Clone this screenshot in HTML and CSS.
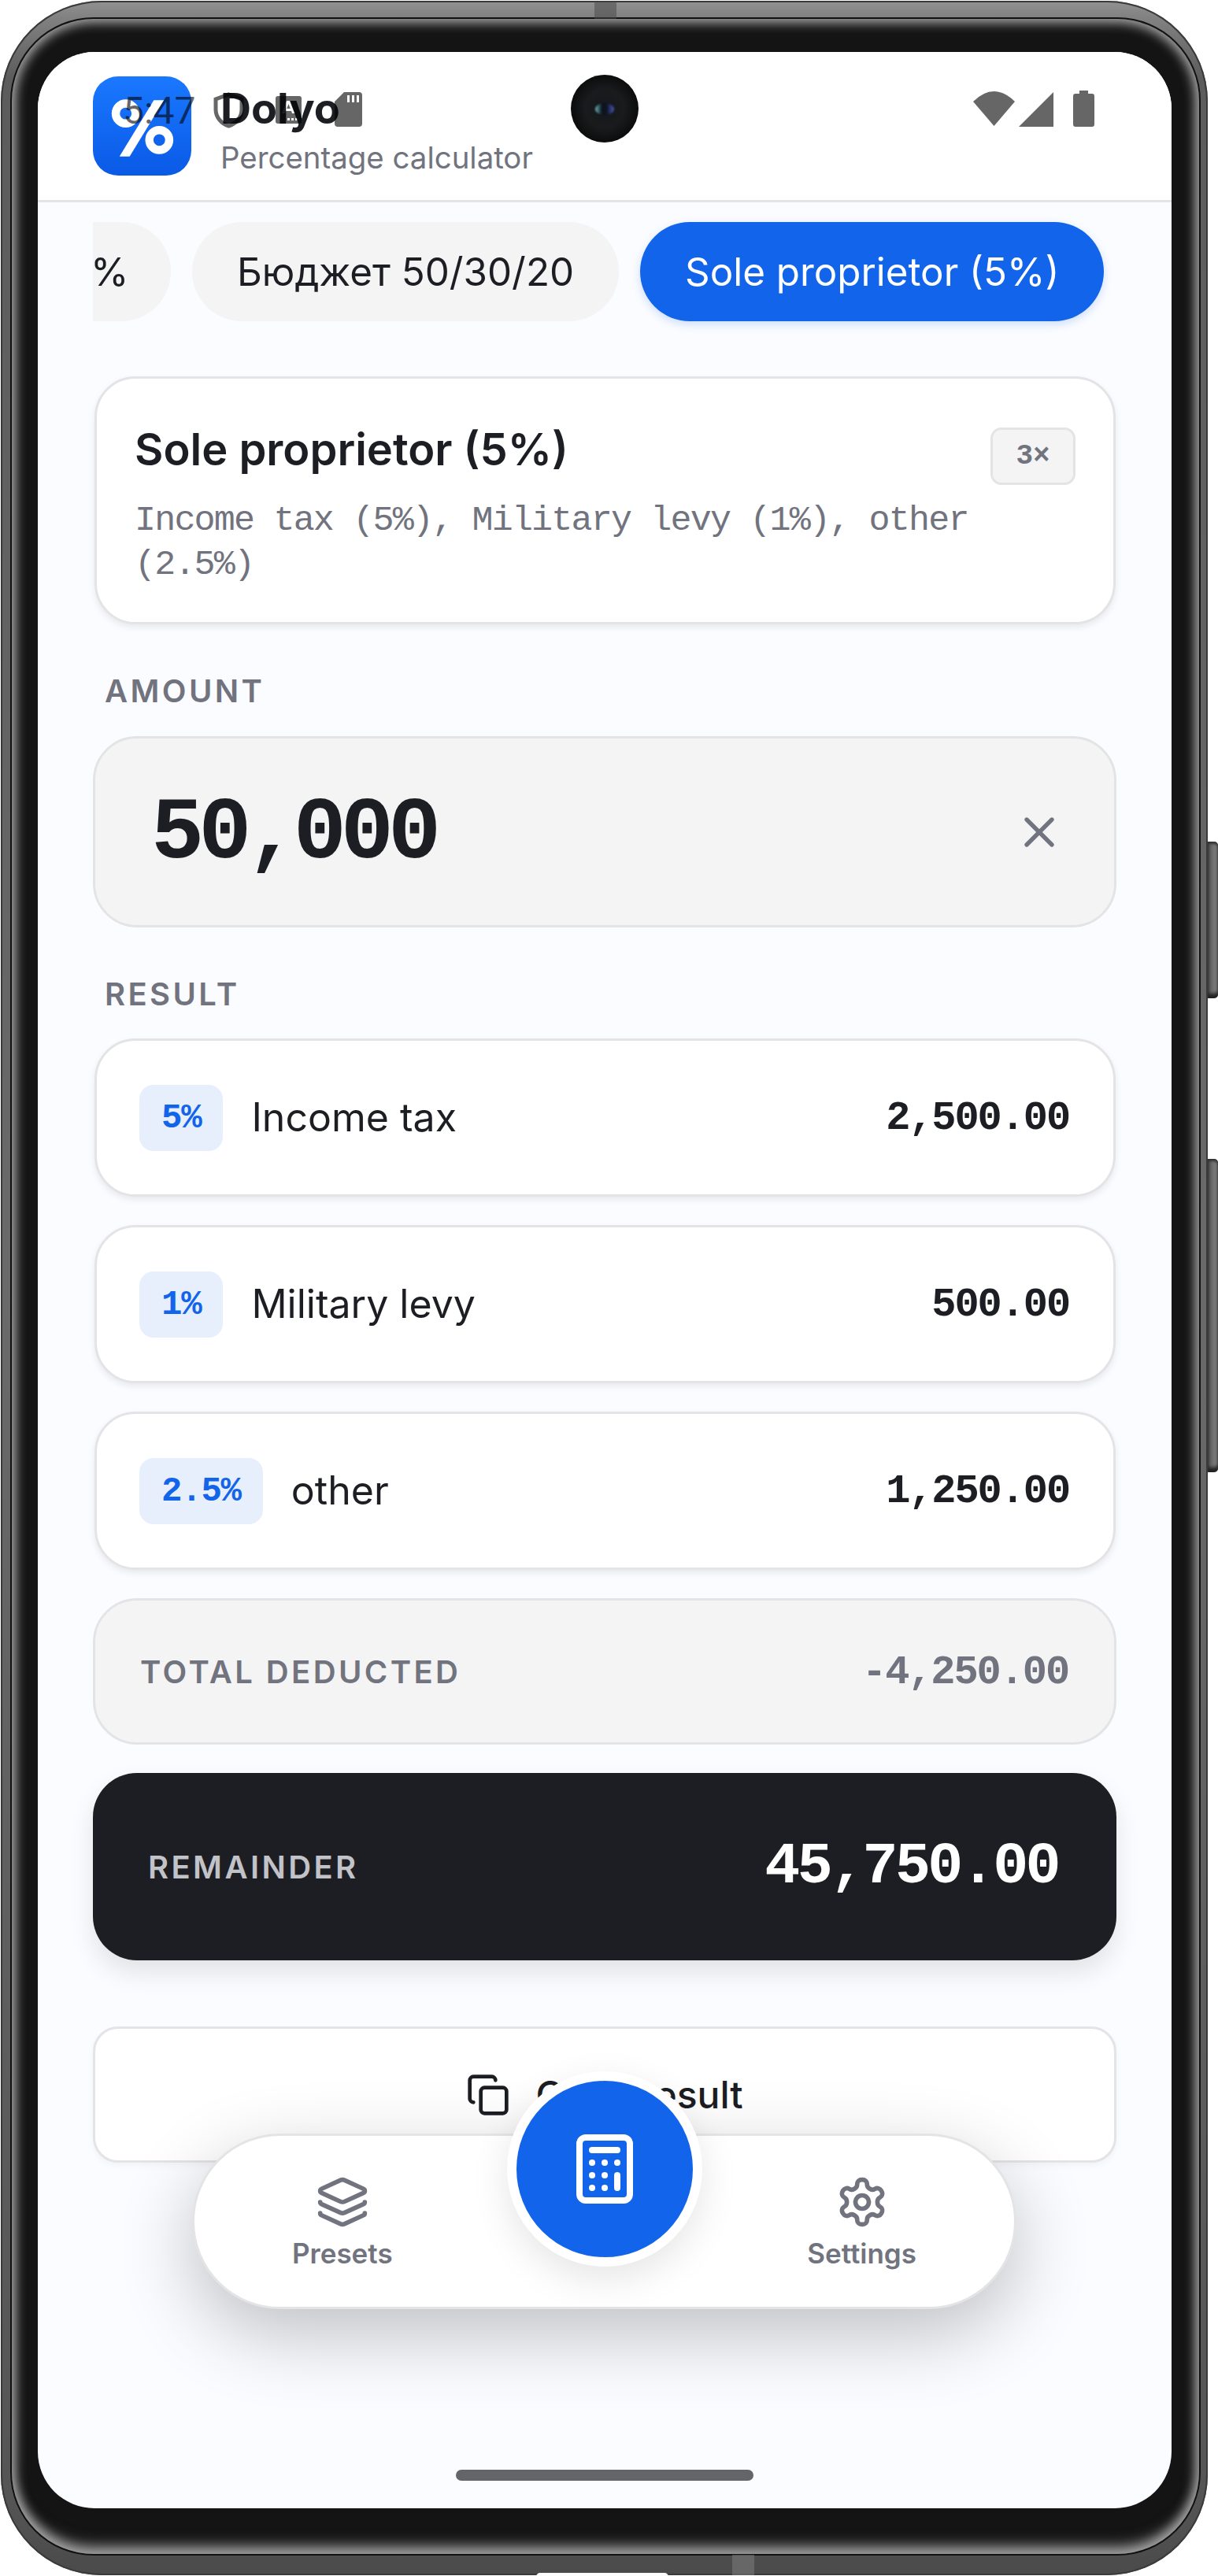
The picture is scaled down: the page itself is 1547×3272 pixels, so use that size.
FILE: index.html
```html
<!DOCTYPE html>
<html>
  <head>
    <title>Dolyo</title>
    <link rel="stylesheet" href="styles.css">
  </head>
  <body>
    <div class="phone">
      <div class="side-btn side-btn-top"></div>
      <div class="side-btn side-btn-low"></div>
      <div class="antenna antenna-top"></div>
      <div class="antenna antenna-bottom"></div>
      <div class="usb"></div>

      <div class="bezel">
        <div class="screen">
          <div class="camera"><div class="lens"></div></div>

          <div class="status">
            <div class="status-left">
              <span class="time">5:47</span>
              <svg class="st-shield" viewBox="0 0 41 46"><path d="M20.5 3 37 9v13c0 10-7 18-16.5 21C11 40 4 32 4 22V9z" fill="none" stroke="#000" stroke-opacity="0.6" stroke-width="5"/></svg>
              <svg class="st-a" viewBox="0 0 33 35"><path class="st-fill" fill-rule="evenodd" d="M3 0h27a3 3 0 0 1 3 3v29a3 3 0 0 1-3 3H3a3 3 0 0 1-3-3V3a3 3 0 0 1 3-3zm12 28v3h3v-3zm5 0v3h3v-3zm5 0v3h3v-3zM14 6 8 22h4l1-3h7l1 3h4L19 6zm2.500 4 2.300 6h-4.600z"/></svg>
              <svg class="st-sd" viewBox="0 0 35 44"><path class="st-fill" fill-rule="evenodd" d="M12 0h19a4 4 0 0 1 4 4v36a4 4 0 0 1-4 4H4a4 4 0 0 1-4-4V12zm4 4v9h3V4zm6 0v9h3V4zm6 0v9h3V4z"/></svg>
            </div>
            <div class="status-right">
              <svg class="st-wifi" viewBox="0 0 53 44"><path class="st-fill" d="M26.500 44 0 13Q26.500-13 53 13z"/></svg>
              <svg class="st-signal" viewBox="0 0 44 44"><path class="st-fill" d="M44 0v44H0z"/></svg>
              <svg class="st-battery" viewBox="0 0 27 46"><path class="st-fill" d="M8 0h11v4h5a3 3 0 0 1 3 3v36a3 3 0 0 1-3 3H3a3 3 0 0 1-3-3V7a3 3 0 0 1 3-3h5z"/></svg>
            </div>
          </div>

          <header class="app-header">
            <div class="logo">
              <svg viewBox="0 0 126 126">
                <circle cx="42" cy="47" r="12.75" fill="none" stroke="#fff" stroke-width="10.5"/>
                <circle cx="85" cy="81" r="12.75" fill="none" stroke="#fff" stroke-width="10.5"/>
                <path d="M78 30h13L47 102H34z" fill="#fff"/>
              </svg>
            </div>
            <div class="app-titles">
              <div class="app-name">Dolyo</div>
              <div class="app-sub">Percentage calculator</div>
            </div>
          </header>

          <div class="chips">
            <div class="chip chip-cut">%</div>
            <div class="chip">Бюджет 50/30/20</div>
            <div class="chip chip-active">Sole proprietor (5%)</div>
          </div>

          <main class="content">
            <section class="preset-card">
              <div class="preset-text">
                <h2>Sole proprietor (5%)</h2>
                <p>Income tax (5%), Military levy (1%), other (2.5%)</p>
              </div>
              <span class="times-badge">3×</span>
            </section>

            <div class="label">AMOUNT</div>
            <div class="amount-input">
              <span class="amount-value">50,000</span>
              <svg class="icon clear-icon" viewBox="0 0 24 24"><path d="M18 6 6 18"/><path d="m6 6 12 12"/></svg>
            </div>

            <div class="label label-result">RESULT</div>
            <div class="results">
              <div class="row">
                <span class="pct">5%</span>
                <span class="row-name">Income tax</span>
                <span class="row-sum">2,500.00</span>
              </div>
              <div class="row">
                <span class="pct">1%</span>
                <span class="row-name">Military levy</span>
                <span class="row-sum">500.00</span>
              </div>
              <div class="row">
                <span class="pct">2.5%</span>
                <span class="row-name">other</span>
                <span class="row-sum">1,250.00</span>
              </div>
              <div class="total">
                <span class="total-label">TOTAL DEDUCTED</span>
                <span class="total-sum">-4,250.00</span>
              </div>
              <div class="remainder">
                <span class="remainder-label">REMAINDER</span>
                <span class="remainder-sum">45,750.00</span>
              </div>
            </div>

            <button class="copy-btn">
              <svg class="icon copy-icon" viewBox="0 0 24 24"><rect width="14" height="14" x="8" y="8" rx="2" ry="2"/><path d="M4 16c-1.1 0-2-.9-2-2V4c0-1.1.9-2 2-2h10c1.1 0 2 .9 2 2"/></svg>
              Copy result
            </button>
          </main>

          <nav class="bottom-nav">
            <div class="nav-item">
              <svg class="icon nav-icon" viewBox="0 0 24 24"><path d="M12.83 2.18a2 2 0 0 0-1.66 0L2.6 6.08a1 1 0 0 0 0 1.83l8.58 3.91a2 2 0 0 0 1.66 0l8.58-3.9a1 1 0 0 0 0-1.83z"/><path d="M2 12a1 1 0 0 0 .58.91l8.6 3.91a2 2 0 0 0 1.65 0l8.58-3.9A1 1 0 0 0 22 12"/><path d="M2 17a1 1 0 0 0 .58.91l8.6 3.91a2 2 0 0 0 1.65 0l8.58-3.9A1 1 0 0 0 22 17"/></svg>
              <span>Presets</span>
            </div>
            <div class="nav-item">
              <svg class="icon nav-icon" viewBox="0 0 24 24"><path d="M12.22 2h-.44a2 2 0 0 0-2 2v.18a2 2 0 0 1-1 1.73l-.43.25a2 2 0 0 1-2 0l-.15-.08a2 2 0 0 0-2.73.73l-.22.38a2 2 0 0 0 .73 2.73l.15.1a2 2 0 0 1 1 1.72v.51a2 2 0 0 1-1 1.74l-.15.09a2 2 0 0 0-.73 2.73l.22.38a2 2 0 0 0 2.73.73l.15-.08a2 2 0 0 1 2 0l.43.25a2 2 0 0 1 1 1.73V20a2 2 0 0 0 2 2h.44a2 2 0 0 0 2-2v-.18a2 2 0 0 1 1-1.73l.43-.25a2 2 0 0 1 2 0l.15.08a2 2 0 0 0 2.73-.73l.22-.39a2 2 0 0 0-.73-2.73l-.15-.08a2 2 0 0 1-1-1.74v-.5a2 2 0 0 1 1-1.74l.15-.09a2 2 0 0 0 .73-2.73l-.22-.38a2 2 0 0 0-2.73-.73l-.15.08a2 2 0 0 1-2 0l-.43-.25a2 2 0 0 1-1-1.73V4a2 2 0 0 0-2-2z"/><circle cx="12" cy="12" r="3"/></svg>
              <span>Settings</span>
            </div>
          </nav>

          <button class="fab">
            <svg class="icon fab-icon" viewBox="0 0 24 24"><rect width="16" height="20" x="4" y="2" rx="2"/><line x1="8" x2="16" y1="6" y2="6"/><line x1="16" x2="16" y1="14" y2="18"/><path d="M16 10h.01"/><path d="M12 10h.01"/><path d="M8 10h.01"/><path d="M12 14h.01"/><path d="M8 14h.01"/><path d="M12 18h.01"/><path d="M8 18h.01"/></svg>
          </button>

          <div class="home-bar"></div>
        </div>
      </div>
    </div>
  </body>
</html>
```
FILE: styles.css
```css
* {
  box-sizing: border-box;
}

body {
  margin: 0;
  background: #fff;
  font-family: Inter, "Noto Sans", sans-serif;
  color: #1c1e23;
}

/* device frame */
.phone {
  position: relative;
  width: 1533px;
  height: 3270px;
  margin: 1px 0 0 1px;
  padding: 23px 11px 27px 14px;
  border-radius: 128px;
  background: linear-gradient(180deg, #929292 0, #828282 0.6%, #5c5c5c 3%, #6a6a6a 50%, #555 97%, #4a4a4a 100%);
  box-shadow: inset 0 0 0 2px #3a3a3a;
}

.bezel {
  height: 100%;
  padding: 42px 35px 58px 33px;
  border-radius: 104px;
  background: #141414;
  box-shadow: 0 0 0 2px #111, inset 0 0 14px 5px #a8a8a8, inset 0 -22px 16px -8px #555;
}

.side-btn {
  position: absolute;
  right: -13px;
  width: 13px;
  border-radius: 0 5px 5px 0;
  background: linear-gradient(90deg, #555, #8a8a8a);
  box-shadow: inset 0 3px 3px #333, inset 0 -6px 4px #222;
}

.side-btn-top {
  top: 1068px;
  height: 199px;
}

.side-btn-low {
  top: 1471px;
  height: 398px;
}

.antenna {
  position: absolute;
  width: 28px;
  height: 22px;
  background: rgba(70, 70, 70, 0.5);
}

.antenna-top {
  top: 1px;
  left: 754px;
}

.antenna-bottom {
  bottom: 0;
  left: 929px;
  height: 26px;
  background: rgba(130, 130, 130, 0.5);
}

.usb {
  position: absolute;
  left: 680px;
  bottom: -2px;
  width: 168px;
  height: 5px;
  border-radius: 5px 5px 0 0;
  background: #fff;
}

/* screen */
.screen {
  position: relative;
  height: 100%;
  border-radius: 72px;
  overflow: hidden;
  background: #fbfcff;
}

.camera {
  position: absolute;
  top: 29px;
  left: 677px;
  width: 86px;
  height: 86px;
  border-radius: 50%;
  background: radial-gradient(circle, #14171a 0, #191b1d 40%, #0a0a0a 75%, #050505 100%);
  z-index: 5;
}

.lens {
  width: 24px;
  height: 15px;
  margin: 36px auto 0;
  border-radius: 50%;
  background: linear-gradient(90deg, #6fb8b4, #0c1420 35%, #0c1420 60%, #4a55b8);
  filter: blur(1px);
}

/* status bar sits over the app header, translucent like the real one */
.status {
  position: absolute;
  top: 49px;
  left: 108px;
  right: 98px;
  display: flex;
  justify-content: space-between;
  z-index: 4;
}

.status-left {
  display: flex;
  position: relative;
  height: 46px;
}

.status-left svg {
  position: absolute;
}

.st-fill {
  fill: rgba(0, 0, 0, 0.6);
}

.time {
  font-family: Roboto, sans-serif;
  font-size: 48px;
  line-height: 46px;
  margin-top: 3px;
  color: rgba(0, 0, 0, 0.6);
}

.st-shield {
  left: 114px;
  top: 2px;
  width: 41px;
  height: 46px;
}

.st-a {
  left: 194px;
  top: 7px;
  width: 33px;
  height: 35px;
}

.st-sd {
  left: 269px;
  top: 2px;
  width: 35px;
  height: 44px;
}

.status-right {
  display: flex;
  align-items: flex-start;
}

.st-wifi {
  width: 53px;
  height: 44px;
  margin-top: 1px;
}

.st-signal {
  width: 44px;
  height: 44px;
  margin: 2px 0 0 5px;
}

.st-battery {
  width: 27px;
  height: 46px;
  margin-left: 25px;
}

.app-header {
  display: flex;
  height: 191px;
  padding: 31px 70px 0;
  gap: 37px;
  background: #fff;
  border-bottom: 3px solid #e4e4e7;
}

.logo {
  width: 125px;
  height: 126px;
  border-radius: 32px;
  background: linear-gradient(180deg, #1a78ff, #0a5ae6);
  overflow: hidden;
}

.logo svg {
  display: block;
  width: 100%;
  height: 100%;
}

.app-titles {
  padding-top: 10px;
}

.app-name {
  font-size: 54px;
  line-height: 62px;
  font-weight: 700;
}

.app-sub {
  margin-top: 7px;
  font-size: 38.4px;
  line-height: 48px;
  color: #71737e;
}

/* preset chips */
.chips {
  display: flex;
  gap: 27px;
  margin: 25px 84px 0 70px;
}

.chip {
  flex: none;
  height: 126px;
  padding: 0 57px;
  border-radius: 63px;
  background: #f4f4f5;
  font-size: 49.3px;
  line-height: 126px;
}

.chip-cut {
  width: 99px;
  padding: 0;
  border-radius: 0 63px 63px 0;
  text-indent: -3px;
}

.chip-active {
  background: #1265ea;
  color: #fff;
  box-shadow: 0 4px 12px rgba(18, 101, 234, 0.2);
}

.content {
  display: flex;
  flex-direction: column;
  padding: 70px 70px 0;
}

.preset-card {
  display: flex;
  justify-content: space-between;
  align-items: flex-start;
  height: 315px;
  margin: 0 1px 0 2px;
  padding: 58px 48px 0;
  border: 3px solid #e4e4e7;
  border-radius: 52px;
  background: #fff;
  box-shadow: 0 4px 8px rgba(0, 0, 0, 0.08);
}

.preset-card h2 {
  margin: 0;
  font-size: 56px;
  line-height: 64px;
  font-weight: 600;
}

.preset-card p {
  width: 1060px;
  margin: 31px 0 0;
  font-family: "Liberation Mono", monospace;
  font-size: 45px;
  line-height: 56px;
  letter-spacing: -1.8px;
  color: #71737e;
}

.times-badge {
  width: 108px;
  height: 73px;
  margin-top: 4px;
  border: 3px solid #e4e4e7;
  border-radius: 14px;
  background: #f4f4f5;
  font-family: "Liberation Mono", monospace;
  font-size: 36px;
  font-weight: 700;
  line-height: 67px;
  text-align: center;
  color: #71737e;
}

.label {
  margin: 61px 0 33px 15px;
  font-size: 40px;
  line-height: 48px;
  font-weight: 600;
  letter-spacing: 3.4px;
  color: #71737e;
}

.label-result {
  margin-bottom: 32px;
}

.amount-input {
  display: flex;
  align-items: center;
  justify-content: space-between;
  height: 243px;
  padding: 0 63px 0 71px;
  border: 3px solid #e4e4e7;
  border-radius: 56px;
  background: #f4f4f5;
}

.amount-value {
  margin-top: 6px;
  font-family: "Liberation Mono", monospace;
  font-size: 112px;
  font-weight: 700;
  letter-spacing: -7px;
}

.icon {
  fill: none;
  stroke: currentColor;
  stroke-width: 2;
  stroke-linecap: round;
  stroke-linejoin: round;
}

.clear-icon {
  width: 64px;
  height: 64px;
  color: #71737e;
}

.results {
  display: flex;
  flex-direction: column;
  gap: 36px;
}

.row {
  display: flex;
  align-items: center;
  height: 201px;
  margin: 0 1px 0 2px;
  padding: 0 56px 0 54px;
  border: 3px solid #e4e4e7;
  border-radius: 52px;
  background: #fff;
  box-shadow: 0 4px 8px rgba(0, 0, 0, 0.08);
}

.pct {
  padding: 0 28px;
  height: 84px;
  border-radius: 18px;
  background: #e7effc;
  font-family: "Liberation Mono", monospace;
  font-size: 44px;
  font-weight: 700;
  line-height: 84px;
  letter-spacing: -1.2px;
  color: #1265ea;
}

.row-name {
  margin: 0 0 2px 36px;
  font-size: 50px;
}

.row-sum,
.total-sum {
  margin: 2px 0 0 auto;
  font-family: "Liberation Mono", monospace;
  font-size: 52px;
  font-weight: 700;
  letter-spacing: -2.1px;
}

.total {
  display: flex;
  align-items: center;
  height: 186px;
  padding: 0 58px 0 57px;
  border: 3px solid #e4e4e7;
  border-radius: 56px;
  background: #f4f4f5;
}

.total-label,
.remainder-label {
  font-size: 40px;
  font-weight: 600;
  letter-spacing: 3.4px;
  color: #71737e;
}

.total-sum {
  color: #71737e;
}

.remainder {
  display: flex;
  align-items: center;
  justify-content: space-between;
  height: 238px;
  padding: 0 74px 0 70px;
  border-radius: 56px;
  background: #1c1e23;
  box-shadow: 0 16px 32px rgba(0, 0, 0, 0.1);
}

.remainder-label {
  color: #c2c3c8;
}

.remainder-sum {
  font-family: "Liberation Mono", monospace;
  font-size: 75px;
  font-weight: 700;
  letter-spacing: -3.6px;
  color: #fff;
}

.copy-btn {
  display: flex;
  align-items: center;
  justify-content: center;
  gap: 32px;
  height: 173px;
  margin-top: 84px;
  border: 3px solid #e4e4e7;
  border-radius: 32px;
  background: #fff;
  box-shadow: 0 4px 8px rgba(0, 0, 0, 0.04);
  font-family: Inter, sans-serif;
  font-size: 48px;
  font-weight: 500;
  color: #1c1e23;
}

.copy-icon {
  width: 56px;
  height: 56px;
}

/* floating nav */
.bottom-nav {
  position: absolute;
  top: 2644px;
  left: 196px;
  width: 1047px;
  height: 223px;
  display: flex;
  justify-content: space-between;
  padding: 50px 124px 0 124px;
  border: 3px solid #e4e4e7;
  border-radius: 112px;
  background: #fff;
  box-shadow: 0 32px 96px rgba(0, 0, 0, 0.24);
}

.nav-item {
  display: flex;
  flex-direction: column;
  align-items: center;
  gap: 9px;
  font-size: 35px;
  line-height: 44px;
  font-weight: 600;
  color: #71737e;
}

.nav-icon {
  width: 68px;
  height: 68px;
}

.fab {
  position: absolute;
  top: 2565px;
  left: 596px;
  width: 248px;
  height: 248px;
  padding: 0;
  border: 12px solid #fff;
  border-radius: 50%;
  background: #1265ea;
  box-shadow: 0 16px 48px rgba(0, 0, 0, 0.1);
  color: #fff;
}

.fab-icon {
  display: block;
  width: 96px;
  height: 96px;
  margin: 0 auto;
}

.home-bar {
  position: absolute;
  left: 531px;
  top: 3071px;
  width: 378px;
  height: 14px;
  border-radius: 7px;
  background: #636568;
}
```
